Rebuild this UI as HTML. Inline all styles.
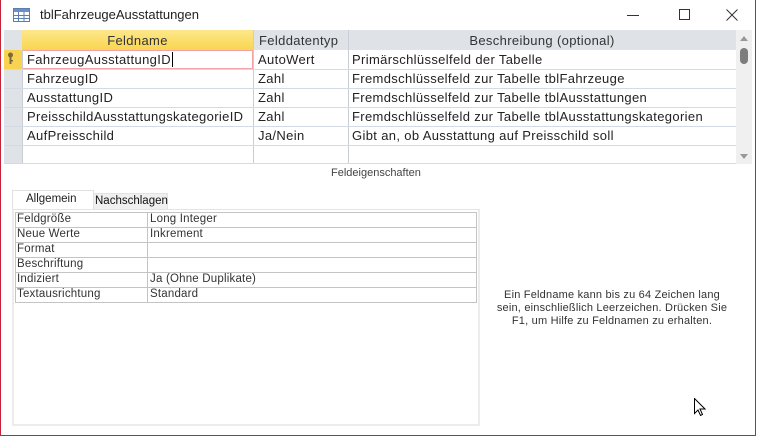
<!DOCTYPE html>
<html><head><meta charset="utf-8"><style>
*{margin:0;padding:0;box-sizing:border-box}
body{width:757px;height:437px;background:#fff;font-family:"Liberation Sans",sans-serif;position:relative;overflow:hidden;color:#222}
.win{position:absolute;left:0;top:0;width:756px;height:436px;border:1px solid #c4233a;border-top:none}
.abs{position:absolute}
.cell{position:absolute;font-size:13px;letter-spacing:0.35px;line-height:19px;white-space:nowrap;overflow:hidden}
.hl{position:absolute;height:1px;background:#d4dae4}
.vl{position:absolute;width:1px;background:#d4dae4}
.p{position:absolute;font-size:11.5px;letter-spacing:0.2px;line-height:15px;white-space:nowrap;color:#333}
</style></head><body>
<div class="win"></div>
<svg class="abs" style="left:13px;top:8px" width="17" height="14" viewBox="0 0 17 14"><rect x="0.5" y="0.5" width="16" height="13" fill="#fff" stroke="#5a7fb5"/><rect x="1" y="1" width="15" height="3" fill="#6d8fc4"/><path d="M1 7.5H16M1 10.5H16M5.5 4V13M11 4V13" stroke="#5a7fb5"/></svg>
<div class="abs" style="left:40px;top:7px;font-size:13px;color:#222">tblFahrzeugeAusstattungen</div>
<div class="abs" style="left:627px;top:15px;width:12px;height:1px;background:#333"></div>
<div class="abs" style="left:679px;top:9px;width:11px;height:11px;border:1px solid #333"></div>
<svg class="abs" style="left:726px;top:9px" width="12" height="12"><path d="M0.5 0.5L11.5 11.5M11.5 0.5L0.5 11.5" stroke="#333"/></svg>
<div class="abs" style="left:4px;top:30px;width:732px;height:20px;background:#dfe3e8"></div>
<div class="abs" style="left:22px;top:30px;width:231px;height:20px;background:linear-gradient(#fde78a,#f9d64f)"></div>
<div class="abs" style="left:4px;top:50px;width:18px;height:114px;background:#dfe3e8"></div>
<div class="abs" style="left:4px;top:50px;width:18px;height:19px;background:#f7d351"></div>
<svg class="abs" style="left:7px;top:52px" width="8" height="14"><circle cx="3.5" cy="3" r="2.5" fill="#7a6a3a"/><rect x="2.5" y="4" width="2" height="8" fill="#7a6a3a"/><rect x="4" y="8" width="2" height="1.5" fill="#7a6a3a"/></svg>
<div class="abs" style="left:22px;top:50px;width:231px;height:19px;border:1px solid #f2a2a8"></div>
<div class="vl" style="left:22px;top:50px;height:114px;background:#c9ced6"></div>
<div class="vl" style="left:253px;top:30px;height:134px;background:#c9ced6"></div>
<div class="vl" style="left:348px;top:30px;height:134px;background:#c9ced6"></div>
<div class="hl" style="left:4px;top:69px;width:732px"></div>
<div class="hl" style="left:4px;top:88px;width:732px"></div>
<div class="hl" style="left:4px;top:107px;width:732px"></div>
<div class="hl" style="left:4px;top:126px;width:732px"></div>
<div class="hl" style="left:4px;top:145px;width:732px"></div>
<div class="hl" style="left:4px;top:163px;width:732px"></div>
<div class="cell" style="left:22px;top:31px;width:231px;text-align:center;color:#333">Feldname</div>
<div class="cell" style="left:259px;top:31px;color:#333">Felddatentyp</div>
<div class="cell" style="left:348px;top:31px;width:388px;text-align:center;color:#333">Beschreibung (optional)</div>
<div class="cell" style="left:27px;top:50px">FahrzeugAusstattungID<span style="border-left:1px solid #000;margin-left:1px"></span></div>
<div class="cell" style="left:27px;top:69px">FahrzeugID</div>
<div class="cell" style="left:27px;top:88px">AusstattungID</div>
<div class="cell" style="left:27px;top:107px">PreisschildAusstattungskategorieID</div>
<div class="cell" style="left:27px;top:126px">AufPreisschild</div>
<div class="cell" style="left:258px;top:50px">AutoWert</div>
<div class="cell" style="left:258px;top:69px">Zahl</div>
<div class="cell" style="left:258px;top:88px">Zahl</div>
<div class="cell" style="left:258px;top:107px">Zahl</div>
<div class="cell" style="left:258px;top:126px">Ja/Nein</div>
<div class="cell" style="left:352px;top:50px">Primärschlüsselfeld der Tabelle</div>
<div class="cell" style="left:352px;top:69px">Fremdschlüsselfeld zur Tabelle tblFahrzeuge</div>
<div class="cell" style="left:352px;top:88px">Fremdschlüsselfeld zur Tabelle tblAusstattungen</div>
<div class="cell" style="left:352px;top:107px">Fremdschlüsselfeld zur Tabelle tblAusstattungskategorien</div>
<div class="cell" style="left:352px;top:126px">Gibt an, ob Ausstattung auf Preisschild soll</div>
<div class="abs" style="left:736px;top:30px;width:16px;height:134px;background:#f0f0f0"></div>
<div class="abs" style="left:740px;top:36px;width:0;height:0;border-left:4px solid transparent;border-right:4px solid transparent;border-bottom:5px solid #999"></div>
<div class="abs" style="left:740px;top:48px;width:8px;height:16px;border-radius:4px;background:#7d7d7d"></div>
<div class="abs" style="left:740px;top:154px;width:0;height:0;border-left:4px solid transparent;border-right:4px solid transparent;border-top:5px solid #999"></div>
<div class="abs" style="left:331px;top:167px;font-size:11px;color:#444">Feldeigenschaften</div>
<div class="abs" style="left:12px;top:190px;width:82px;height:20px;background:#fff;border:1px solid #e2e2e2;border-bottom:none"></div>
<div class="abs" style="left:26px;top:193px;font-size:11.5px;color:#222">Allgemein</div>
<div class="abs" style="left:93px;top:193px;width:75px;height:17px;background:#f0f0f0;border:1px solid #e2e2e2"></div>
<div class="abs" style="left:95px;top:195px;font-size:11.5px;color:#111">Nachschlagen</div>
<div class="abs" style="left:12px;top:209px;width:468px;height:217px;border:2px solid #ececec;border-top:1px solid #e4e4e4"></div>
<div class="abs" style="left:15px;top:212px;width:462px;height:91px;border:1px solid #c4c4c4"></div>
<div class="abs" style="left:147px;top:212px;width:1px;height:91px;background:#c4c4c4"></div>
<div class="abs" style="left:15px;top:227px;width:462px;height:1px;background:#c4c4c4"></div>
<div class="abs" style="left:15px;top:242px;width:462px;height:1px;background:#c4c4c4"></div>
<div class="abs" style="left:15px;top:257px;width:462px;height:1px;background:#c4c4c4"></div>
<div class="abs" style="left:15px;top:272px;width:462px;height:1px;background:#c4c4c4"></div>
<div class="abs" style="left:15px;top:287px;width:462px;height:1px;background:#c4c4c4"></div>
<div class="p" style="left:17px;top:212px">Feldgröße</div><div class="p" style="left:150px;top:212px">Long Integer</div>
<div class="p" style="left:17px;top:227px">Neue Werte</div><div class="p" style="left:150px;top:227px">Inkrement</div>
<div class="p" style="left:17px;top:242px">Format</div>
<div class="p" style="left:17px;top:257px">Beschriftung</div>
<div class="p" style="left:17px;top:272px">Indiziert</div><div class="p" style="left:150px;top:272px">Ja (Ohne Duplikate)</div>
<div class="p" style="left:17px;top:287px">Textausrichtung</div><div class="p" style="left:150px;top:287px">Standard</div>
<div class="abs" style="left:492px;top:289px;width:240px;text-align:center;font-size:11px;letter-spacing:0.2px;line-height:13px;color:#333;white-space:nowrap">Ein Feldname kann bis zu 64 Zeichen lang<br>sein, einschließlich Leerzeichen. Drücken Sie<br>F1, um Hilfe zu Feldnamen zu erhalten.</div>
<svg class="abs" style="left:694px;top:398px" width="12" height="19"><path d="M0.5 0.5V15.5L4 12L6.5 17.5L8.5 16.5L6 11H11Z" fill="#fff" stroke="#000"/></svg>
</body></html>
